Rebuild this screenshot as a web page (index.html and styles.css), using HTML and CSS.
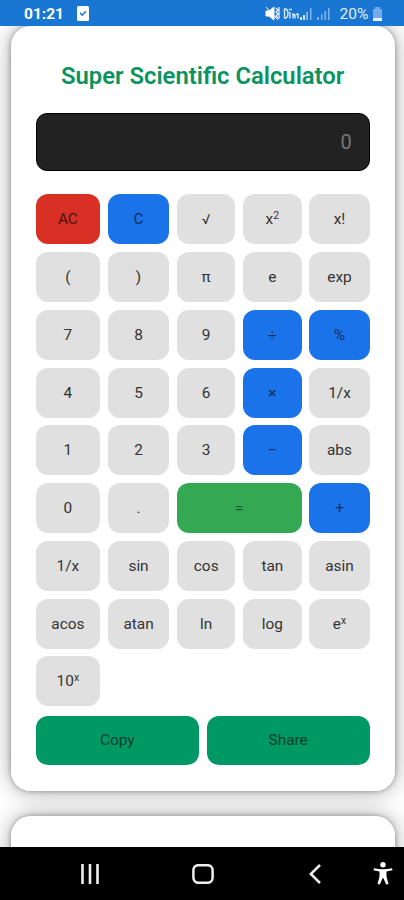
FILE: index.html
```
<!DOCTYPE html>
<html lang="en">
<head>
<meta charset="utf-8">
<title>Super Scientific Calculator</title>
<link rel="stylesheet" href="styles.css">
</head>
<body>
<header class="status">
  <span class="clock">01:21</span>
  <svg class="task" width="12" height="15" viewBox="0 0 12 15"><rect width="12" height="15" rx="1.5" fill="#fff"/><path d="M3 6.8l2.2 2.4L9 5.2" fill="none" stroke="#1976d2" stroke-width="1.5"/></svg>
  <svg class="signals" width="66" height="16" viewBox="0 0 66 16">
    <path d="M1 5h3l5-4v13l-5-4H1zM1 1l12 13" fill="#fff" stroke="#fff" stroke-width="1"/>
    <path d="M11 2l2 2-2 2 2 2-2 2 2 2M14 1v12" fill="none" stroke="#fff" stroke-width="1.1"/>
    <g fill="none" stroke="#d5e6f8" stroke-width="1.4"><path d="M19.500 3v9h1.500q2-1 2-4.500t-2-4.500zM24 3.500h3M25 6v6.500M28 12.500V8l2 1v3.500M31 8.500l2-.5v4.500"/></g>
    <g fill="#d5e6f8"><path d="M35 11h2v3h-2zM38 9h2v5h-2z"/><path d="M41 6h2v8h-2zM45 2h1.500v12H45zM52 11h2v3h-2zM56 8h1.500v6H56zM59.500 5H61v9h-1.500zM63 2h1.500v12H63z" opacity=".55"/></g>
  </svg>
  <span class="percent">20%</span>
  <svg width="11" height="14" viewBox="0 0 11 14"><path d="M3 0h5v2h2v12H1V2h2z" fill="#75ace5"/><path d="M1 11h9v3H1z" fill="#e8f2fc"/></svg>
</header>
<main class="page">
  <section class="card">
    <h1>Super Scientific Calculator</h1>
    <div class="display">0</div>
    <div class="keys">
      <button class="red">AC</button><button class="blue">C</button><button class="root">√</button><button>x<sup>2</sup></button><button>x!</button>
      <button>(</button><button>)</button><button>π</button><button>e</button><button>exp</button>
      <button>7</button><button>8</button><button>9</button><button class="blue">÷</button><button class="blue">%</button>
      <button>4</button><button>5</button><button>6</button><button class="blue">×</button><button>1/x</button>
      <button>1</button><button>2</button><button>3</button><button class="blue">−</button><button>abs</button>
      <button>0</button><button>.</button><button class="equals">=</button><button class="blue">+</button>
      <button>1/x</button><button>sin</button><button>cos</button><button>tan</button><button>asin</button>
      <button>acos</button><button>atan</button><button>ln</button><button>log</button><button>e<sup>x</sup></button>
      <button>10<sup>x</sup></button>
    </div>
    <div class="actions"><button>Copy</button><button>Share</button></div>
  </section>
  <section class="card next"></section>
</main>
<nav class="navbar">
  <svg width="18" height="20" viewBox="0 0 18 20"><path d="M1.500 0v20M9 0v20M16.500 0v20" stroke="#eee" stroke-width="2.600"/></svg>
  <svg width="22" height="20" viewBox="0 0 22 20"><rect x="1.400" y="1.200" width="19.200" height="17.600" rx="5" fill="none" stroke="#eee" stroke-width="2.500"/></svg>
  <svg width="12" height="20" viewBox="0 0 12 20"><path d="M11 1L1.800 10 11 19" fill="none" stroke="#eee" stroke-width="2.500"/></svg>
  <svg width="20" height="23" viewBox="0 0 20 23"><circle cx="10" cy="2.700" r="2.700" fill="#fff"/><path d="M1 6.200q9 2.200 18 0l.5 2-6 1.300v5L15.500 22l-2.300.6L10.300 16h-.6l-2.900 6.600L4.500 22l2-7.500v-5l-6-1.300z" fill="#fff"/></svg>
</nav>
</body>
</html>
```
FILE: styles.css
```
* { box-sizing: border-box; }
body {
  margin: 0;
  height: 900px;
  display: flex;
  flex-direction: column;
  overflow: hidden;
  background: #fff;
  font-family: Roboto, "Noto Sans", sans-serif;
}
.status {
  flex: none;
  height: 25.500px;
  padding: 2px 21.500px 0 24px;
  display: flex;
  align-items: center;
  background: #1976d2;
  color: #fff;
}
.clock { width: 53px; font-size: 15.500px; font-weight: 700; }
.signals { margin-left: auto; margin-right: 9px; }
.percent { width: 32px; font-size: 15.500px; color: #e3effb; }
.page {
  flex: 1;
  min-height: 0;
  overflow: hidden;
  padding: 0 9.300px 0 10.700px;
}
.card {
  position: relative;
  height: 765.500px;
  padding: 36px 25px 0;
  border-radius: 20px;
  background: #fff;
}
/* Shadow layer sits under both cards so neither one shades the other. */
.card::before {
  content: "";
  position: absolute;
  inset: 0;
  z-index: -1;
  border-radius: inherit;
  box-shadow: 0 0 5px rgba(0, 0, 0, .32), 0 0 22px rgba(0, 0, 0, .36);
}
.next { margin-top: 24.500px; }
h1 {
  margin: 0 -10px 22.700px;
  height: 29px;
  line-height: 29px;
  font-size: 23.800px;
  font-weight: 600;
  text-align: center;
  white-space: nowrap;
  color: #0b935f;
}
.display {
  height: 58px;
  padding-right: 17px;
  border: 1.500px solid #000;
  border-radius: 11px;
  background: #222;
  color: #777;
  font-size: 20px;
  line-height: 56px;
  text-align: right;
}
.keys {
  margin-top: 23.300px;
  display: grid;
  grid-template-columns: 64.500fr 61.500fr 58.500fr 58.500fr 60.500fr;
  grid-auto-rows: 49.900px;
  gap: 7.850px 7.750px;
}
button {
  min-width: 0;
  padding: 0;
  border: 0;
  border-radius: 12px;
  background: #e0e0e0;
  color: #333;
  font: 400 15.400px Roboto, "Noto Sans", sans-serif;
}
sup {
  font-size: 10.500px;
  line-height: 0;
  vertical-align: 5px;
}
.root { font-size: 14px; }
.red { background: #d93025; color: #4a1512; }
.blue { background: #1a73e8; color: #0b2e5e; }
.equals { grid-column: span 2; background: #34a853; color: #17602b; }
.actions {
  margin-top: 9.300px;
  display: grid;
  grid-template-columns: 1fr 1fr;
  gap: 7.750px;
}
.actions button { height: 49.800px; background: #009865; color: #06402b; }
.navbar {
  flex: none;
  height: 53px;
  padding: 0 11px 0 81px;
  display: flex;
  align-items: center;
  background: #000;
}
.navbar svg:nth-child(2) { margin-left: 93px; }
.navbar svg:nth-child(3) { margin-left: 95px; }
.navbar svg:nth-child(4) { margin-left: auto; }
```
